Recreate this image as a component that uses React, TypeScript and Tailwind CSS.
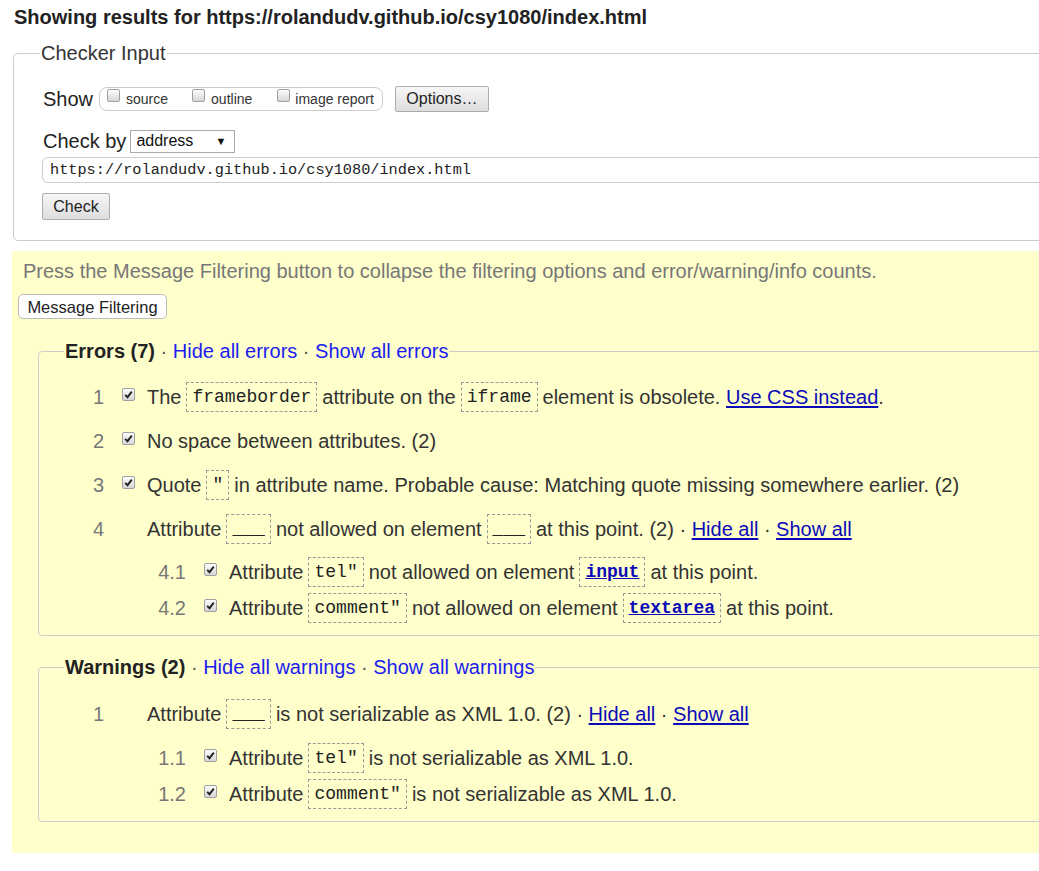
import React from 'react';

const SANS = "font-['Liberation_Sans',Arial,sans-serif]";
const MONO = "font-['Liberation_Mono','Courier_New',monospace]";

function Box({ checked = false }: { checked?: boolean }) {
  return (
    <span className="inline-flex h-[13px] w-[13px] shrink-0 items-center justify-center rounded-[2px] border border-[#a0a0a0] bg-gradient-to-b from-[#fcfcfc] to-[#d6d6d6]">
      {checked && (
        <svg width="9" height="9" viewBox="0 0 9 9">
          <path d="M1.2 4.8 L3.5 7.2 L7.8 1.6" fill="none" stroke="#222" strokeWidth="1.9" />
        </svg>
      )}
    </span>
  );
}

function Code({ children, link = false }: { children: React.ReactNode; link?: boolean }) {
  return (
    <code
      className={`mx-[5px] inline-block border border-dashed border-[#999] px-[5px] py-[3px] text-[18px] leading-[22px] ${MONO} ${
        link ? 'font-bold text-[#0b0bb8] underline' : 'text-[#222]'
      }`}
    >
      {children}
    </code>
  );
}

function A({ children }: { children: React.ReactNode }) {
  return <span className="text-[#0b0bb8] underline underline-offset-2">{children}</span>;
}

function Row({
  n,
  checked,
  sub = false,
  children,
}: {
  n: string;
  checked?: boolean;
  sub?: boolean;
  children: React.ReactNode;
}) {
  return (
    <li className={`flex items-center ${sub ? 'ml-[81px] h-[36px]' : 'h-[44px]'}`}>
      <span className={`${sub ? 'w-[40px]' : 'w-[39px]'} text-right text-[#777]`}>{n}</span>
      <span className="mb-[6px] ml-[18px] flex h-[13px] w-[13px]">{checked && <Box checked />}</span>
      <span className="ml-[12px] flex items-center whitespace-nowrap">{children}</span>
    </li>
  );
}

function Legend({ title, hide, show }: { title: string; hide: string; show: string }) {
  return (
    <legend className="ml-[-1px] px-[1px] text-[20px] leading-[23px]">
      <b className="text-[#222]">{title}</b>
      <span className="text-[#555]"> · </span>
      <span className="text-[#1c1cf0]">{hide}</span>
      <span className="text-[#555]"> · </span>
      <span className="text-[#1c1cf0]">{show}</span>
    </legend>
  );
}

export default function App() {
  return (
    <div className={`min-h-[871px] w-full overflow-hidden bg-white text-[#333] ${SANS}`}>
      <h2 className="pl-[14px] pt-[5px] text-[20px] font-bold leading-[24px] text-[#222]">
        Showing results for https://rolandudv.github.io/csy1080/index.html
      </h2>

      {/* Checker Input */}
      <fieldset className="ml-[13px] mt-[13px] w-[1100px] rounded-[5px] border border-[#ccc] pb-[20px] pl-[29px]">
        <legend className="ml-[-3px] px-[1px] text-[20px] leading-[23px] text-[#333]">Checker Input</legend>

        <div className="mt-[21px] flex h-[26px] items-center">
          <span className="text-[20px] text-[#222]">Show</span>
          <div className="ml-[6px] flex h-[24px] items-center rounded-[8px] border border-[#ccc] pl-[7px] pr-[8px] text-[14px] text-[#333]">
            <span className="mb-[7px] flex"><Box /></span>
            <span className="ml-[6px]">source</span>
            <span className="mb-[7px] ml-[24px] flex"><Box /></span>
            <span className="ml-[6px]">outline</span>
            <span className="mb-[7px] ml-[25px] flex"><Box /></span>
            <span className="ml-[5px]">image report</span>
          </div>
          <button className="ml-[12px] h-[26px] w-[94px] rounded-[2px] border border-[#adadad] bg-gradient-to-b from-[#f6f6f6] to-[#dedede] text-[16px] text-[#222]">
            Options…
          </button>
        </div>

        <div className="mt-[18px] flex h-[22px] items-center">
          <span className="text-[20px] leading-[22px] text-[#222]">Check by</span>
          <div className="ml-[4px] flex h-[23px] w-[105px] items-center justify-between border border-[#a9a9a9] bg-white pl-[5px] pr-[8px] text-[16px] text-[#111]">
            <span>address</span>
            <span className="text-[11px]">▼</span>
          </div>
        </div>

        <div className={`ml-[-1px] mt-[5px] flex h-[26px] items-center rounded-[6px] border border-[#ccc] pl-[7px] text-[15.25px] text-[#222] ${MONO}`}>
          https://rolandudv.github.io/csy1080/index.html
        </div>

        <button className="ml-[-1px] mt-[10px] block h-[27px] w-[68px] rounded-[2px] border border-[#adadad] bg-gradient-to-b from-[#f6f6f6] to-[#dedede] text-[16px] text-[#222]">
          Check
        </button>
      </fieldset>

      {/* Results */}
      <div className="ml-[12px] mt-[10px] w-[1100px] bg-[#ffffcc] pb-[31px] pt-[8px]">
        <p className="pl-[11px] text-[20px] leading-[24px] text-[#777]">
          Press the Message Filtering button to collapse the filtering options and error/warning/info counts.
        </p>
        <button className="ml-[6px] mt-[11px] h-[25px] w-[149px] rounded-[5px] border border-[#bbb] bg-white text-[16.5px] text-[#222]">
          Message Filtering
        </button>

        <fieldset className="ml-[26px] mt-[20px] rounded-[4px] border border-[#ccc] pb-[9px] pl-[26px] text-[20px] text-[#333]">
          <Legend title="Errors (7)" hide="Hide all errors" show="Show all errors" />
          <ol className="pt-[12px]">
            <Row n="1" checked>
              The<Code>frameborder</Code>attribute on the<Code>iframe</Code>element is obsolete.&nbsp;<A>Use CSS instead</A>.
            </Row>
            <Row n="2" checked>No space between attributes. (2)</Row>
            <Row n="3" checked>
              Quote<Code>"</Code>in attribute name. Probable cause: Matching quote missing somewhere earlier. (2)
            </Row>
            <Row n="4">
              Attribute<Code>___</Code>not allowed on element<Code>___</Code>at this point. (2) ·&nbsp;<A>Hide all</A>&nbsp;·&nbsp;<A>Show all</A>
            </Row>
            <li className="mt-[3px]">
              <ol>
                <Row n="4.1" checked sub>
                  Attribute<Code>tel"</Code>not allowed on element<Code link>input</Code>at this point.
                </Row>
                <Row n="4.2" checked sub>
                  Attribute<Code>comment"</Code>not allowed on element<Code link>textarea</Code>at this point.
                </Row>
              </ol>
            </li>
          </ol>
        </fieldset>

        <fieldset className="ml-[26px] mt-[20px] rounded-[4px] border border-[#ccc] pb-[9px] pl-[26px] text-[20px] text-[#333]">
          <Legend title="Warnings (2)" hide="Hide all warnings" show="Show all warnings" />
          <ol className="pt-[13px]">
            <Row n="1">
              Attribute<Code>___</Code>is not serializable as XML 1.0. (2) ·&nbsp;<A>Hide all</A>&nbsp;·&nbsp;<A>Show all</A>
            </Row>
            <li className="mt-[4px]">
              <ol>
                <Row n="1.1" checked sub>
                  Attribute<Code>tel"</Code>is not serializable as XML 1.0.
                </Row>
                <Row n="1.2" checked sub>
                  Attribute<Code>comment"</Code>is not serializable as XML 1.0.
                </Row>
              </ol>
            </li>
          </ol>
        </fieldset>
      </div>
    </div>
  );
}
